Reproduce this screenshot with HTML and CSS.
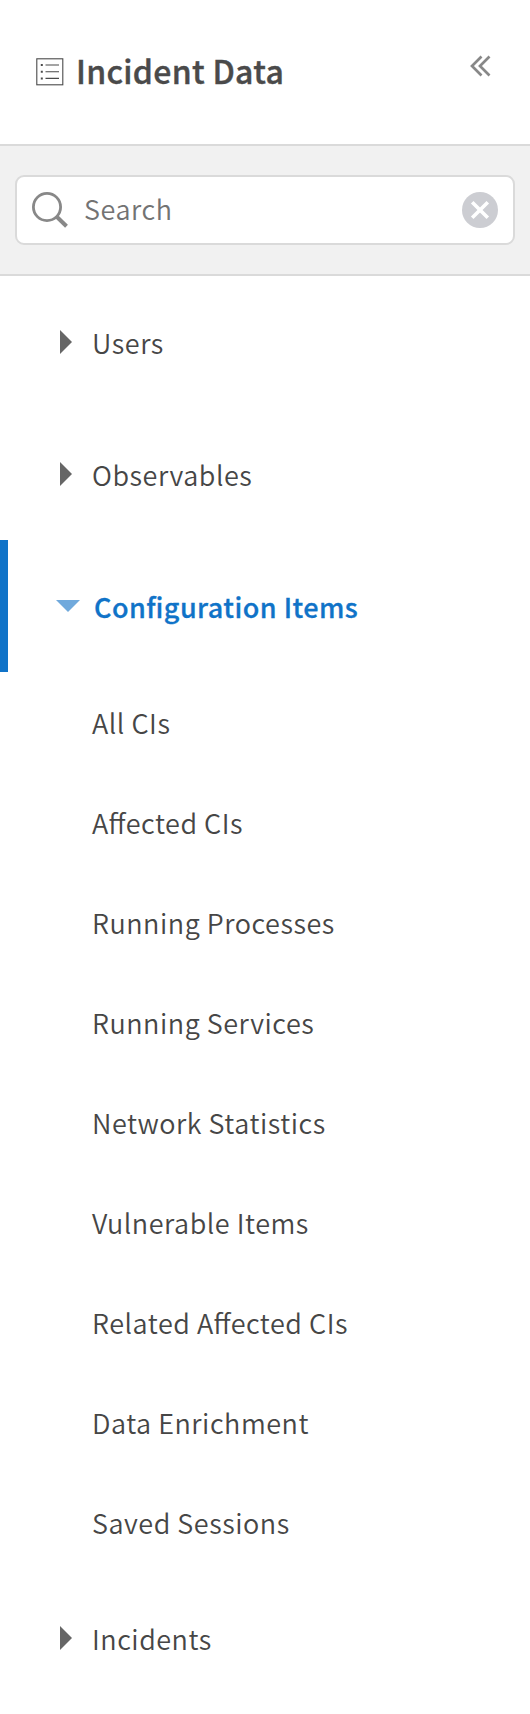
FILE: index.html
```html
<!DOCTYPE html>
<html lang="en">
<head>
<meta charset="utf-8">
<title>Incident Data</title>
<link rel="stylesheet" href="styles.css">
</head>
<body>
<aside class="panel">
  <header class="header">
    <svg class="list-icon" width="28" height="28" viewBox="0 0 28 28" fill="none" stroke="#4a4a4a" stroke-width="1.1"><rect x=".8" y=".8" width="26" height="26"/><path d="M9.500 7h13.500M9.500 13.700h13.500M9.500 20.400h13.500"/><path d="M4.800 7h2M4.800 13.700h2M4.800 20.400h2" stroke-width="2"/></svg>
    <h1 class="title">Incident Data</h1>
    <svg class="collapse" width="21" height="22" viewBox="0 0 21 22" fill="none" stroke="#888" stroke-width="2.700"><path d="M11.500 1.500L2 11l9.500 9.500M19.500 1.500L10 11l9.500 9.500"/></svg>
  </header>
  <div class="search-bar">
    <div class="search">
      <svg class="magnifier" width="36" height="36" viewBox="0 0 36 36" fill="none" stroke="#888"><circle cx="15" cy="15" r="13.600" stroke-width="2.800"/><path d="M24.500 24.500l10 9.800" stroke-width="4"/></svg>
      <span class="placeholder">Search</span>
      <svg class="clear" width="36" height="36" viewBox="0 0 36 36"><circle cx="18" cy="18" r="18" fill="#cccdd2"/><path d="M10.200 10.200l15.600 15.600M25.800 10.200L10.200 25.800" stroke="#fff" stroke-width="3.600"/></svg>
    </div>
  </div>
  <nav class="tree">
    <div class="group"><svg class="arrow" width="12" height="24" viewBox="0 0 12 24"><path d="M0 0l12 12L0 24z"/></svg><span class="label">Users</span></div>
    <div class="group"><svg class="arrow" width="12" height="24" viewBox="0 0 12 24"><path d="M0 0l12 12L0 24z"/></svg><span class="label">Observables</span></div>
    <div class="group active"><svg class="arrow" width="24" height="12" viewBox="0 0 24 12"><path d="M0 0h24L12 12z"/></svg><span class="label">Configuration Items</span></div>
    <ul class="items">
      <li>All CIs</li>
      <li>Affected CIs</li>
      <li>Running Processes</li>
      <li>Running Services</li>
      <li>Network Statistics</li>
      <li>Vulnerable Items</li>
      <li>Related Affected CIs</li>
      <li>Data Enrichment</li>
      <li>Saved Sessions</li>
    </ul>
    <div class="group"><svg class="arrow" width="12" height="24" viewBox="0 0 12 24"><path d="M0 0l12 12L0 24z"/></svg><span class="label">Incidents</span></div>
  </nav>
</aside>
</body>
</html>
```
FILE: styles.css
```css
* { box-sizing: border-box; }
body { margin: 0; background: #fff; color: #464646; font-family: "Noto Sans CJK SC", "Noto Sans", sans-serif; font-size: 27px; font-weight: 350; letter-spacing: .53px; font-feature-settings: "liga" 1; }
.panel { width: 530px; height: 1714px; overflow: hidden; }
.header { display: flex; align-items: center; height: 144px; padding: 0 39px 0 36px; }
.title { margin: 0 auto 0 12px; padding-bottom: 5px; color: #4a4a4a; font-size: 32px; font-weight: 500; letter-spacing: .3px; -webkit-text-stroke: .4px; }
.collapse { margin-bottom: 13px; }
.search-bar { height: 132px; padding: 29px 15px; background: #f1f1f1; border-top: 2px solid #dadada; border-bottom: 2px solid #dadada; }
.search { display: flex; align-items: center; height: 70px; padding: 0 15px; background: #fff; border: 2px solid #dadada; border-radius: 9px; }
.placeholder { margin: 0 auto 0 16px; padding-bottom: 3px; color: #737373; }
.group { display: flex; align-items: center; height: 132px; padding-left: 60px; }
.group .arrow { fill: #666; }
.label { margin-left: 20px; }
.active { padding-left: 48px; border-left: 8px solid #1073c8; color: #1073c8; font-weight: 500; letter-spacing: .46px; -webkit-text-stroke: .3px; }
.active .arrow { fill: #70a9dc; }
.active .label { margin-left: 14px; }
.items { list-style: none; margin: 0; padding: 0 0 0 92px; }
.items li { height: 100px; padding-top: 1px; line-height: 100px; }
```
